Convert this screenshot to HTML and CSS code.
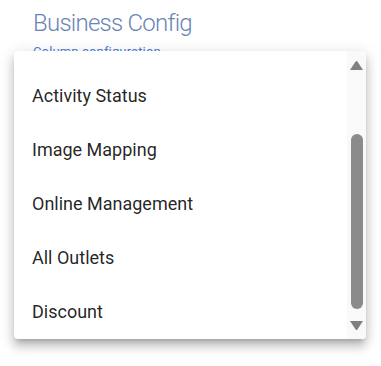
FILE: index.html
```html
<!DOCTYPE html>
<html>
<head>
<meta charset="utf-8">
<title>Business Config</title>
<link rel="stylesheet" href="styles.css">
</head>
<body>
<div class="page">
  <h1 class="title">Business Config</h1>
  <div class="subtitle">Column configuration</div>
</div>

<div class="menu">
  <ul class="menu-list">
    <li class="menu-item">Activity Status</li>
    <li class="menu-item">Image Mapping</li>
    <li class="menu-item">Online Management</li>
    <li class="menu-item">All Outlets</li>
    <li class="menu-item">Discount</li>
  </ul>
  <div class="scroll">
    <div class="scroll-btn up">
      <svg width="13" height="9" viewBox="0 0 13 9"><path d="M5.6 0.6 Q6.5 -0.4 7.4 0.6 L13 9 L0 9 Z" fill="#808080"/></svg>
    </div>
    <div class="scroll-track">
      <div class="scroll-thumb"></div>
    </div>
    <div class="scroll-btn down">
      <svg width="13" height="9" viewBox="0 0 13 9"><path d="M5.6 8.4 Q6.5 9.4 7.4 8.4 L13 0 L0 0 Z" fill="#808080"/></svg>
    </div>
  </div>
</div>
</body>
</html>
```

FILE: styles.css
```css
body {
  margin: 0;
  background: #fff;
  font-family: Roboto, "Liberation Sans", sans-serif;
}

.page {
  padding: 9px 33px 0;
}

.title {
  margin: 0;
  font-size: 24px;
  line-height: 28px;
  font-weight: 300;
  letter-spacing: -0.75px;
  color: #6a84b6;
}

.subtitle {
  margin-top: 7px;
  font-size: 13px;
  line-height: 15px;
  letter-spacing: 0.15px;
  color: #4a80d8;
}

/* popover list, sits over the page */
.menu {
  position: absolute;
  left: 14px;
  top: 51px;
  width: 352px;
  height: 288px;
  display: flex;
  background: #fff;
  border-radius: 4px;
  overflow: hidden;
  box-shadow: 0px 5px 5px -3px rgba(0,0,0,0.2), 0px 8px 10px 1px rgba(0,0,0,0.14), 0px 3px 14px 2px rgba(0,0,0,0.12);
}

.menu-list {
  flex: 1;
  margin: 0;
  padding: 17px 0 0;
  list-style: none;
}

.menu-item {
  height: 54px;
  display: flex;
  align-items: center;
  padding: 0 18px;
  font-size: 18px;
  color: rgba(0,0,0,0.87);
}

.scroll {
  width: 19px;
  display: flex;
  flex-direction: column;
  background: #f9f9f9;
}

.scroll-btn {
  display: flex;
  justify-content: center;
  align-items: center;
}

.scroll-btn.up {
  height: 29px;
}

.scroll-btn.down {
  height: 27px;
}

.scroll-track {
  flex: 1;
  display: flex;
  justify-content: center;
}

.scroll-thumb {
  margin-top: 54px;
  width: 12px;
  height: 175px;
  border-radius: 6px;
  background: #8b8b8b;
}
```
